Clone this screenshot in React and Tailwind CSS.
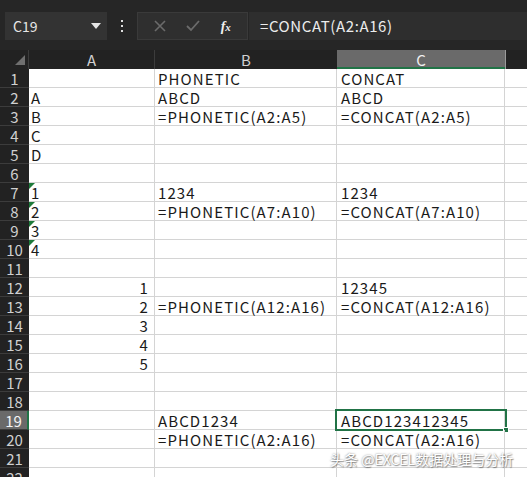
import React from "react";

const ROWS = [
  { a: "", b: "PHONETIC", c: "CONCAT" },
  { a: "A", b: "ABCD", c: "ABCD" },
  { a: "B", b: "=PHONETIC(A2:A5)", c: "=CONCAT(A2:A5)" },
  { a: "C" },
  { a: "D" },
  {},
  { a: "1", b: "1234", c: "1234", tri: true },
  { a: "2", b: "=PHONETIC(A7:A10)", c: "=CONCAT(A7:A10)", tri: true },
  { a: "3", tri: true },
  { a: "4", tri: true },
  {},
  { n: "1", c: "12345" },
  { n: "2", b: "=PHONETIC(A12:A16)", c: "=CONCAT(A12:A16)" },
  { n: "3" },
  { n: "4" },
  { n: "5" },
  {},
  {},
  { b: "ABCD1234", c: "ABCD123412345", sel: true },
  { b: "=PHONETIC(A2:A16)", c: "=CONCAT(A2:A16)" },
  {},
  {},
];

const font = { fontFamily: '"Noto Sans CJK SC", "Noto Sans", sans-serif' };

const App = () => {
  return (
    <div className="w-[527px] h-[477px] overflow-hidden bg-[#262626] relative" style={font}>
      {/* ================= FORMULA BAR ================= */}
      <div className="h-[50px] flex items-start pt-[12px] pl-[5px]">
        <div className="w-[102px] h-[28px] bg-[#333333] flex items-center justify-between pl-[8px] pr-[6px] text-[14px] text-[#e6e6e6]">
          <span>C19</span>
          <svg width="10" height="6" viewBox="0 0 10 6">
            <path d="M0 0 L10 0 L5 6 Z" fill="#e6e6e6" />
          </svg>
        </div>
        <div className="w-[30px] h-[28px] flex flex-col items-center justify-center gap-[3px]">
          <span className="w-[2px] h-[2px] bg-[#e0e0e0]" />
          <span className="w-[2px] h-[2px] bg-[#e0e0e0]" />
          <span className="w-[2px] h-[2px] bg-[#e0e0e0]" />
        </div>
        <div className="w-[111px] h-[28px] bg-[#2f2f2f] border border-[#3a3a3a] flex items-center justify-around px-[6px]">
          <svg width="12" height="12" viewBox="0 0 12 12">
            <path d="M1 1 L11 11 M11 1 L1 11" stroke="#6b6b6b" strokeWidth="1.6" />
          </svg>
          <svg width="14" height="12" viewBox="0 0 14 12">
            <path d="M1 6 L5 10 L13 1" stroke="#6b6b6b" strokeWidth="1.8" fill="none" />
          </svg>
          <span className="text-[14px] text-[#f0f0f0] italic font-bold" style={{ fontFamily: '"Liberation Serif", serif' }}>
            f<span className="text-[11px]">x</span>
          </span>
        </div>
        <div className="flex-1 h-[28px] ml-[1px] bg-[#2e2e2e] flex items-center pl-[11px] text-[15px] tracking-[0.6px] text-[#ececec]">
          =CONCAT(A2:A16)
        </div>
      </div>

      {/* ================= COLUMN HEADERS ================= */}
      <div className="h-[19px] flex bg-[#222222] text-[15px] text-[#d0d0d0] leading-[19px]">
        <div className="w-[29px] shrink-0 relative border-r border-[#3c3c3c]">
          <svg className="absolute left-[15px] top-[5px]" width="10" height="10" viewBox="0 0 10 10">
            <path d="M10 0 L10 10 L0 10 Z" fill="#6f6f6f" />
          </svg>
        </div>
        <div className="w-[126px] shrink-0 text-center border-r border-[#3c3c3c]">A</div>
        <div className="w-[182px] shrink-0 text-center">B</div>
        <div className="w-[168px] shrink-0 text-center bg-[#6a6a6a] text-[#f0f0f0] border-b-2 border-[#217346]">C</div>
        <div className="flex-1 border-l border-[#9a9a9a]" />
      </div>

      {/* ================= GRID ================= */}
      <div className="bg-white">
        {ROWS.map((r, i) => (
          <div key={i} className="h-[19px] flex text-[15px] tracking-[1.1px] leading-[20px] text-[#1a1a1a]">
            <div
              className={`w-[29px] shrink-0 text-center text-[15px] leading-[19px] tracking-normal border-b border-[#3c3c3c] ${
                r.sel ? "bg-[#6a6a6a] text-[#f4f4f4] border-r-2 border-r-[#217346]" : "bg-[#222222] text-[#d0d0d0]"
              }`}
            >
              {i + 1}
            </div>
            <div className="w-[126px] shrink-0 border-r border-b border-[#d4d4d4] relative px-[2px]">
              {r.tri && (
                <svg className="absolute left-0 top-0" width="6" height="6" viewBox="0 0 6 6">
                  <path d="M0 0 L6 0 L0 6 Z" fill="#1d7a3a" />
                </svg>
              )}
              {r.a}
              {r.n && <div className="text-right pr-[3px]">{r.n}</div>}
            </div>
            <div className="w-[182px] shrink-0 border-r border-b border-[#d4d4d4] px-[3px] whitespace-nowrap">{r.b}</div>
            <div className="w-[168px] shrink-0 border-r border-b border-[#d4d4d4] px-[4px] whitespace-nowrap relative">
              {r.c}
              {r.sel && (
                <>
                  <div className="absolute left-[-2px] top-[-2px] w-[172px] h-[22px] border-2 border-[#217346]" />
                  <div className="absolute right-[-5px] bottom-[-4px] w-[6px] h-[6px] bg-[#217346] border border-white" />
                </>
              )}
            </div>
            <div className="flex-1 border-b border-[#d4d4d4]" />
          </div>
        ))}
      </div>

      {/* ================= WATERMARK ================= */}
      <div
        className="absolute left-[330px] top-[449px] text-[14px] text-white whitespace-nowrap"
        style={{ textShadow: "0 0 2px rgba(0,0,0,0.5), 1px 1px 1px rgba(0,0,0,0.35)" }}
      >
        头条 @EXCEL数据处理与分析
      </div>
    </div>
  );
};

export default App;
